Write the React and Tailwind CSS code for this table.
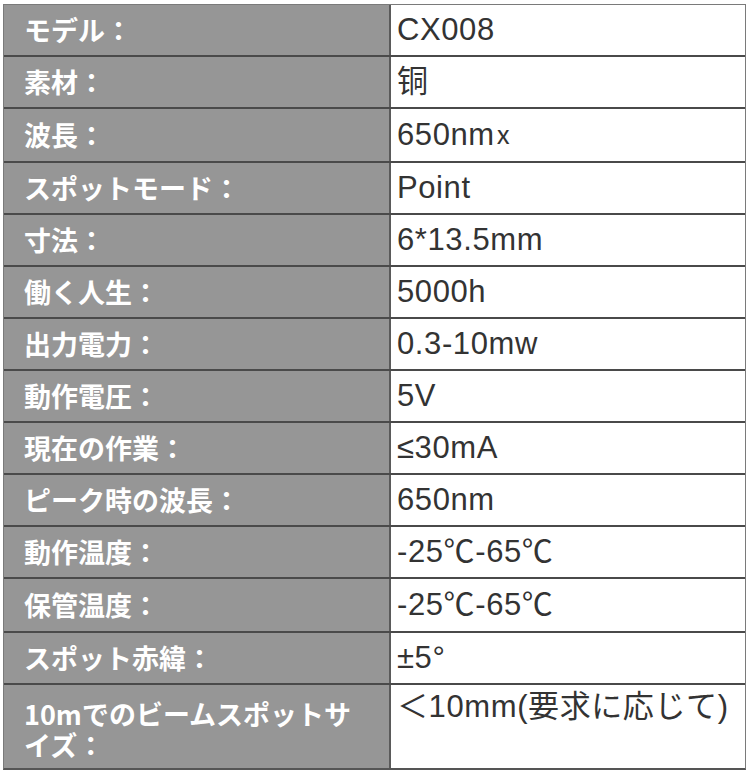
import React from "react";

const rows = [
  { label: "モデル：", value: "CX008", h: "h-[52px]" },
  { label: "素材：", value: "铜", h: "h-[52px]" },
  { label: "波長：", value: "650nm", extra: "x", h: "h-[54px]" },
  { label: "スポットモード：", value: "Point", h: "h-[52px]" },
  { label: "寸法：", value: "6*13.5mm", h: "h-[52px]" },
  { label: "働く人生：", value: "5000h", h: "h-[52px]" },
  { label: "出力電力：", value: "0.3-10mw", h: "h-[52px]" },
  { label: "動作電圧：", value: "5V", h: "h-[52px]" },
  { label: "現在の作業：", value: "≤30mA", h: "h-[52px]" },
  { label: "ピーク時の波長：", value: "650nm", h: "h-[52px]" },
  { label: "動作温度：", value: "-25℃-65℃", h: "h-[52px]" },
  { label: "保管温度：", value: "-25℃-65℃", h: "h-[54px]" },
  { label: "スポット赤緯：", value: "±5°", h: "h-[52px]" },
];

function App() {
  return (
    <div className="w-[750px] h-[775px] bg-white pt-[4px] pl-[3px]">
      <div className="w-[743px] border border-[#7a7a7a] border-b-2 border-b-[#555]">
        {rows.map((row, i) => (
          <div
            key={i}
            className={`grid grid-cols-[387px_1fr] border-b-2 border-[#4a4a4a] ${row.h}`}
          >
            <div className="bg-[#969696] border-r-2 border-[#5a5a5a] flex items-center pl-[20px] pb-[2px] text-white font-bold text-[27px] leading-none font-['Noto_Sans_CJK_JP','Noto_Sans',sans-serif]">
              {row.label}
            </div>
            <div className="flex items-center pl-[6px] text-[#333] text-[31px] tracking-[0.6px] font-['Liberation_Sans','Noto_Sans_CJK_JP',sans-serif]">
              {row.value}
              {row.extra && (
                <span className="ml-[2px] -mt-[6px] text-[26px] font-['Noto_Sans_CJK_JP',sans-serif]">
                  {row.extra}
                </span>
              )}
            </div>
          </div>
        ))}
        <div className="grid grid-cols-[387px_1fr] h-[83px]">
          <div className="bg-[#969696] border-r-2 border-[#5a5a5a] pl-[20px] pt-[13px] text-white font-bold text-[27px] leading-[31px] font-['Noto_Sans_CJK_JP','Noto_Sans',sans-serif]">
            <div>10mでのビームスポットサ</div>
            <div>イズ：</div>
          </div>
          <div className="pl-[6px] pt-[4px] text-[#333] text-[31px] leading-[36px] tracking-[0.6px] font-['Liberation_Sans','Noto_Sans_CJK_JP',sans-serif]">
            ＜10mm(要求に応じて)
          </div>
        </div>
      </div>
    </div>
  );
}

export default App;
